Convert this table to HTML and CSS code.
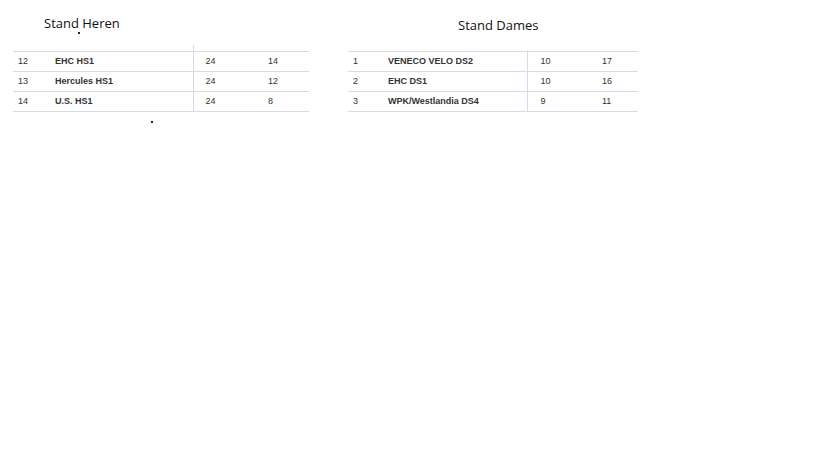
FILE: index.html
```html
<!DOCTYPE html>
<html lang="nl">
<head>
  <meta charset="UTF-8">
  <title>Stand</title>
  <link rel="stylesheet" href="styles.css">
</head>
<body>
  <div class="standings">
    <div class="panel panel-heren">
      <h2 class="title">Stand Heren</h2>
      <div class="dot dot-title"></div>
      <table class="table">
        <colgroup>
          <col class="c-pos"><col class="c-team"><col class="c-played"><col class="c-points">
        </colgroup>
        <thead>
          <tr class="head-row"><th></th><th class="split"></th><th></th><th></th></tr>
        </thead>
        <tbody>
          <tr><td>12</td><td class="team split">EHC HS1</td><td class="num">24</td><td class="num">14</td></tr>
          <tr><td>13</td><td class="team split">Hercules HS1</td><td class="num">24</td><td class="num">12</td></tr>
          <tr><td>14</td><td class="team split">U.S. HS1</td><td class="num">24</td><td class="num">8</td></tr>
        </tbody>
      </table>
      <div class="dot dot-bottom"></div>
    </div>

    <div class="panel panel-dames">
      <h2 class="title">Stand Dames</h2>
      <table class="table">
        <colgroup>
          <col class="c-pos"><col class="c-team"><col class="c-played"><col class="c-points">
        </colgroup>
        <thead>
          <tr class="head-row"><th></th><th class="split"></th><th></th><th></th></tr>
        </thead>
        <tbody>
          <tr><td>1</td><td class="team split">VENECO VELO DS2</td><td class="num">10</td><td class="num">17</td></tr>
          <tr><td>2</td><td class="team split">EHC DS1</td><td class="num">10</td><td class="num">16</td></tr>
          <tr><td>3</td><td class="team split">WPK/Westlandia DS4</td><td class="num">9</td><td class="num">11</td></tr>
        </tbody>
      </table>
    </div>
  </div>
</body>
</html>
```

FILE: styles.css
```css
* {
  box-sizing: border-box;
}
body {
  margin: 0;
  background: #fff;
  font-family: "Liberation Sans", Arial, sans-serif;
  color: #333;
}
.standings {
  display: flex;
  gap: 39px;
  padding-left: 13px;
}
.panel-heren {
  width: 296px;
}
.panel-dames {
  width: 290px;
}
.title {
  margin: 0;
  font-family: "Open Sans", sans-serif;
  font-weight: 400;
  font-size: 13px;
  line-height: 18px;
  color: #111;
  padding-top: 14px;
  height: 45px;
}
.panel-heren .title {
  padding-left: 31px;
}
.panel-dames .title {
  padding-left: 110px;
  padding-top: 16px;
  height: 50px;
}
.dot {
  width: 2px;
  height: 2px;
  background: #222;
}
.dot-title {
  margin: -13px 0 11px 65px;
}
.dot-bottom {
  margin: 9px 0 0 138px;
}
.table {
  width: 100%;
  border-collapse: collapse;
  table-layout: fixed;
  font-size: 9px;
}
.panel-heren .c-pos { width: 37px; }
.panel-heren .c-team { width: 143px; }
.panel-heren .c-played { width: 63px; }
.panel-dames .c-pos { width: 35px; }
.panel-dames .c-team { width: 144px; }
.panel-dames .c-played { width: 62px; }
.head-row th {
  height: 6px;
  padding: 0;
}
.panel-dames .head-row th {
  height: 1px;
}
.table td {
  height: 20px;
  padding: 0 0 0 5px;
  border-top: 1px solid #d6dbe7;
  vertical-align: middle;
}
.table tbody tr:last-child td {
  border-bottom: 1px solid #d6dbe7;
}
.table .split {
  border-right: 1px solid #d6dbe7;
}
.table .team {
  font-weight: 700;
}
.table .num {
  padding-left: 12px;
}
.panel-dames .num {
  padding-left: 13px;
}
```
